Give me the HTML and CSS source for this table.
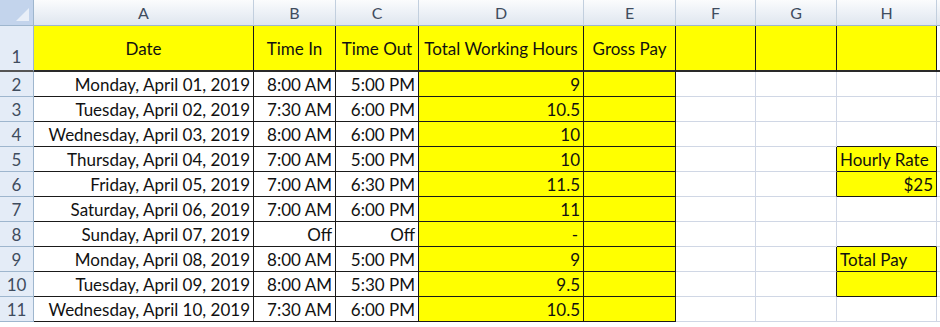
FILE: index.html
```html
<!DOCTYPE html>
<html>
<head>
<meta charset="utf-8">
<link rel="stylesheet" href="styles.css">
</head>
<body>
<div class="sheet">
  <div class="corner"><svg width="33" height="25" viewBox="0 0 33 25"><polygon points="29,8 29,21 16,21" fill="#e9eff8"/></svg></div>
  <div class="ch">A</div><div class="ch">B</div><div class="ch">C</div><div class="ch">D</div><div class="ch">E</div><div class="ch">F</div><div class="ch">G</div><div class="ch">H</div><div class="ch last"></div>

  <div class="rh first">1</div>
  <div class="c b y ctr top">Date</div><div class="c b y ctr top">Time In</div><div class="c b y ctr top">Time Out</div><div class="c b y ctr top">Total Working Hours</div><div class="c b y ctr top">Gross Pay</div><div class="c b y top"></div><div class="c b y top"></div><div class="c b y top"></div><div class="c last top"></div>

  <div class="rh">2</div>
  <div class="c b r">Monday, April 01, 2019</div><div class="c b r">8:00 AM</div><div class="c b r">5:00 PM</div><div class="c b y r">9</div><div class="c b y"></div><div class="c"></div><div class="c"></div><div class="c"></div><div class="c last"></div>

  <div class="rh">3</div>
  <div class="c b r">Tuesday, April 02, 2019</div><div class="c b r">7:30 AM</div><div class="c b r">6:00 PM</div><div class="c b y r">10.5</div><div class="c b y"></div><div class="c"></div><div class="c"></div><div class="c"></div><div class="c last"></div>

  <div class="rh">4</div>
  <div class="c b r">Wednesday, April 03, 2019</div><div class="c b r">8:00 AM</div><div class="c b r">6:00 PM</div><div class="c b y r">10</div><div class="c b y"></div><div class="c"></div><div class="c"></div><div class="c bb"></div><div class="c last"></div>

  <div class="rh">5</div>
  <div class="c b r">Thursday, April 04, 2019</div><div class="c b r">7:00 AM</div><div class="c b r">5:00 PM</div><div class="c b y r">10</div><div class="c b y"></div><div class="c"></div><div class="c br"></div><div class="c b y l">Hourly Rate</div><div class="c last"></div>

  <div class="rh">6</div>
  <div class="c b r">Friday, April 05, 2019</div><div class="c b r">7:00 AM</div><div class="c b r">6:30 PM</div><div class="c b y r">11.5</div><div class="c b y"></div><div class="c"></div><div class="c br"></div><div class="c b y r">$25</div><div class="c last"></div>

  <div class="rh">7</div>
  <div class="c b r">Saturday, April 06, 2019</div><div class="c b r">7:00 AM</div><div class="c b r">6:00 PM</div><div class="c b y r">11</div><div class="c b y"></div><div class="c"></div><div class="c"></div><div class="c"></div><div class="c last"></div>

  <div class="rh">8</div>
  <div class="c b r">Sunday, April 07, 2019</div><div class="c b r">Off</div><div class="c b r">Off</div><div class="c b y r dash">-</div><div class="c b y"></div><div class="c"></div><div class="c"></div><div class="c bb"></div><div class="c last"></div>

  <div class="rh">9</div>
  <div class="c b r">Monday, April 08, 2019</div><div class="c b r">8:00 AM</div><div class="c b r">5:00 PM</div><div class="c b y r">9</div><div class="c b y"></div><div class="c"></div><div class="c br"></div><div class="c b y l">Total Pay</div><div class="c last"></div>

  <div class="rh">10</div>
  <div class="c b r">Tuesday, April 09, 2019</div><div class="c b r">8:00 AM</div><div class="c b r">5:30 PM</div><div class="c b y r">9.5</div><div class="c b y"></div><div class="c"></div><div class="c br"></div><div class="c b y"></div><div class="c last"></div>

  <div class="rh">11</div>
  <div class="c b r">Wednesday, April 10, 2019</div><div class="c b r">7:30 AM</div><div class="c b r">6:00 PM</div><div class="c b y r">10.5</div><div class="c b y"></div><div class="c"></div><div class="c"></div><div class="c"></div><div class="c last"></div>
</div>
</body>
</html>
```

FILE: styles.css
```css
html, body {
  margin: 0;
  padding: 0;
  background: #ffffff;
}

.sheet {
  display: grid;
  grid-template-columns: 34px 220px 82px 83px 165px 92px 80px 81px 100px 1fr;
  grid-template-rows: 26px 46px repeat(10, 25px);
  width: 940px;
  font-family: Lato, "Liberation Sans", sans-serif;
  font-size: 17px;
  color: #111111;
}

.sheet > div {
  box-sizing: border-box;
  display: flex;
  align-items: center;
  white-space: nowrap;
  overflow: hidden;
}

.corner {
  background: #c3d4ec;
  border-right: 1px solid #9eb6ce;
  border-bottom: 1px solid #9eb6ce;
  padding: 0;
}

.corner svg {
  display: block;
}

.ch {
  justify-content: center;
  background: linear-gradient(to bottom, #fbfcfd 0%, #eef2f7 45%, #dfe6ef 100%);
  border-right: 1px solid #c2cfde;
  border-bottom: 1px solid #9eb6ce;
  color: #3f4c5e;
  font-size: 16px;
}

.ch.last {
  border-right: none;
}

.rh {
  justify-content: center;
  background: #e4ecf7;
  border-right: 1px solid #9eb6ce;
  border-bottom: 1px solid #9eb6ce;
  color: #3f4c5e;
  font-size: 17px;
}

.rh.first {
  align-items: flex-end;
  padding-bottom: 3px;
  border-bottom: 2px solid #555555;
}

.c {
  background: #ffffff;
  border-right: 1px solid #d0d7e5;
  border-bottom: 1px solid #d0d7e5;
  padding: 0 3px;
}

.c.last {
  border-right: none;
}

.c.top {
  border-bottom: 2px solid #2a2a2a;
}

.b {
  border-right: 1px solid #1a1a1a;
  border-bottom: 1px solid #1a1a1a;
}

.br {
  border-right: 1px solid #1a1a1a;
}

.bb {
  border-bottom: 1px solid #1a1a1a;
}

.y {
  background: #ffff00;
}

.r {
  justify-content: flex-end;
}

.l {
  justify-content: flex-start;
}

.ctr {
  justify-content: center;
}

.dash {
  padding-right: 5px;
}
```
